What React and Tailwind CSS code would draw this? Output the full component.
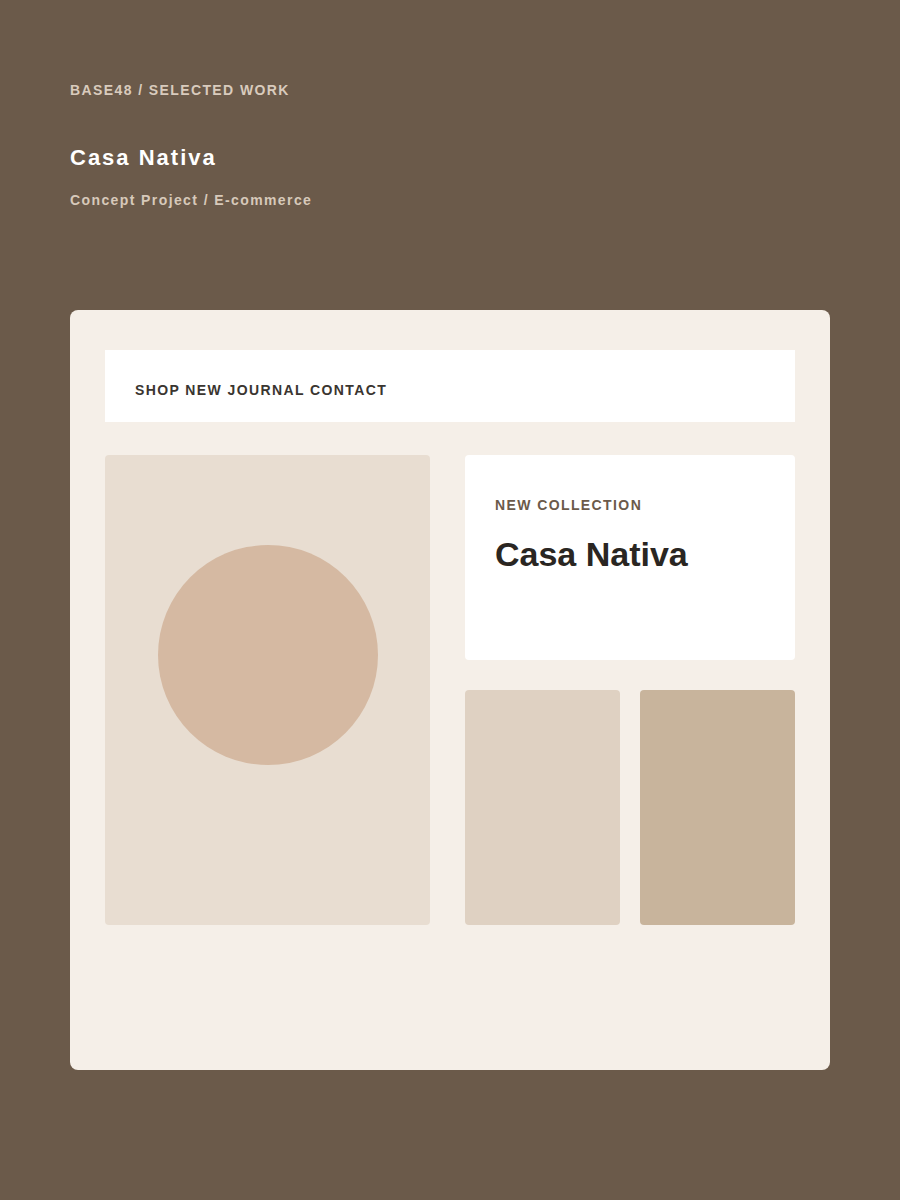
import React from 'react';

const App = () => {
  return (
    <div
      className="min-h-[1200px] w-full bg-[#6b5a4a] px-[70px] pt-[80px]"
      style={{ fontFamily: '"Liberation Sans", Arial, sans-serif' }}
    >
      {/* Page header */}
      <div className="text-[14px] font-bold leading-[20px] tracking-[1.4px] text-[#d9cbbd]">
        BASE48 / SELECTED WORK
      </div>
      <h1 className="mt-[44px] text-[22px] font-bold leading-[28px] tracking-[2px] text-white">
        Casa Nativa
      </h1>
      <div className="mt-[18px] text-[14px] font-bold leading-[20px] tracking-[1.4px] text-[#d7c9ba]">
        Concept Project / E-commerce
      </div>

      {/* Mockup card */}
      <div className="mt-[100px] h-[760px] rounded-[8px] bg-[#f5efe8] px-[35px] pt-[40px]">
        {/* Nav */}
        <div className="flex h-[72px] items-center bg-white px-[30px] pt-[8px]">
          <span className="text-[14px] font-bold tracking-[1.4px] text-[#3a3530]">
            SHOP NEW JOURNAL CONTACT
          </span>
        </div>

        <div className="mt-[33px] grid grid-cols-[325px_1fr] gap-[35px]">
          {/* Hero image */}
          <div className="flex h-[470px] justify-center rounded-[4px] bg-[#e8ddd1] pt-[90px]">
            <div className="h-[220px] w-[220px] rounded-full bg-[#d5b9a2]" />
          </div>

          <div className="flex flex-col gap-[30px]">
            <div className="h-[205px] rounded-[4px] bg-white px-[30px] pt-[42px]">
              <div className="text-[14px] font-bold leading-[16px] tracking-[1.4px] text-[#6b5a4a]">
                NEW COLLECTION
              </div>
              <div className="mt-[20px] text-[34px] font-bold leading-[42px] text-[#2a2622]">
                Casa Nativa
              </div>
            </div>
            <div className="grid grid-cols-2 gap-[20px]">
              <div className="h-[235px] rounded-[4px] bg-[#dfd1c2]" />
              <div className="h-[235px] rounded-[4px] bg-[#c8b49c]" />
            </div>
          </div>
        </div>
      </div>
    </div>
  );
};

export default App;
